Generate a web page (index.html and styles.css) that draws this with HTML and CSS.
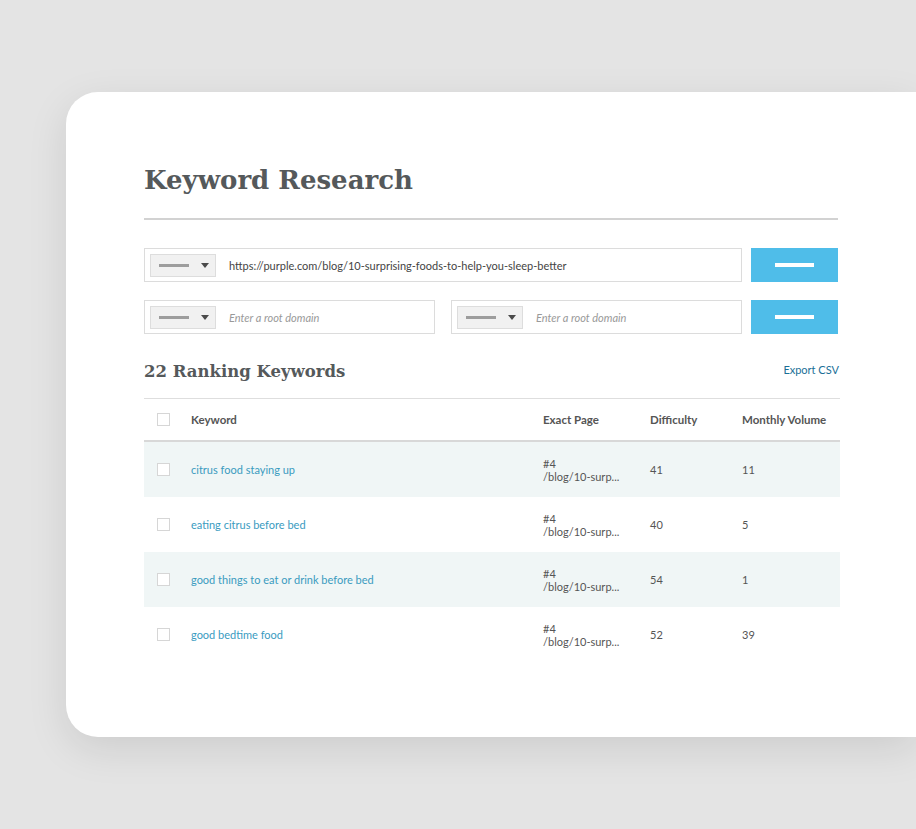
FILE: index.html
```html
<!DOCTYPE html>
<html>
<head>
<meta charset="utf-8">
<link rel="stylesheet" href="styles.css">
</head>
<body>
<div class="card">
  <div class="content">
    <h1 class="title">Keyword Research</h1>
    <div class="divider"></div>
    <div class="form-row first">
      <div class="field wide">
        <div class="select"><span class="bar"></span><span class="caret"></span></div>
        <span class="value">https://purple.com/blog/10-surprising-foods-to-help-you-sleep-better</span>
      </div>
      <div class="btn"><span class="btn-bar"></span></div>
    </div>
    <div class="form-row second">
      <div class="field half">
        <div class="select"><span class="bar"></span><span class="caret"></span></div>
        <span class="placeholder">Enter a root domain</span>
      </div>
      <div class="field half">
        <div class="select"><span class="bar"></span><span class="caret"></span></div>
        <span class="placeholder">Enter a root domain</span>
      </div>
      <div class="btn"><span class="btn-bar"></span></div>
    </div>
    <div class="section-head">
      <h2 class="subtitle">22 Ranking Keywords</h2>
      <span class="export">Export CSV</span>
    </div>
    <div class="table">
      <div class="row head">
        <div class="cell"><span class="check"></span></div>
        <div class="cell">Keyword</div>
        <div class="cell">Exact Page</div>
        <div class="cell">Difficulty</div>
        <div class="cell">Monthly Volume</div>
      </div>
      <div class="row shaded">
        <div class="cell"><span class="check"></span></div>
        <div class="cell kw">citrus food staying up</div>
        <div class="cell page">#4<br>/blog/10-surp...</div>
        <div class="cell num">41</div>
        <div class="cell num">11</div>
      </div>
      <div class="row">
        <div class="cell"><span class="check"></span></div>
        <div class="cell kw">eating citrus before bed</div>
        <div class="cell page">#4<br>/blog/10-surp...</div>
        <div class="cell num">40</div>
        <div class="cell num">5</div>
      </div>
      <div class="row shaded">
        <div class="cell"><span class="check"></span></div>
        <div class="cell kw">good things to eat or drink before bed</div>
        <div class="cell page">#4<br>/blog/10-surp...</div>
        <div class="cell num">54</div>
        <div class="cell num">1</div>
      </div>
      <div class="row">
        <div class="cell"><span class="check"></span></div>
        <div class="cell kw">good bedtime food</div>
        <div class="cell page">#4<br>/blog/10-surp...</div>
        <div class="cell num">52</div>
        <div class="cell num">39</div>
      </div>
    </div>
  </div>
</div>
</body>
</html>
```
FILE: styles.css
```css
html, body {
  margin: 0;
  padding: 0;
}
body {
  width: 916px;
  height: 829px;
  overflow: hidden;
  background: #e4e4e4;
  font-family: Lato, "Open Sans", sans-serif;
}
.card {
  margin: 92px 0 0 66px;
  width: 850px;
  height: 645px;
  background: #fff;
  border-radius: 32px 0 0 32px;
  box-shadow: 0 12px 40px rgba(0, 0, 0, 0.10);
  box-sizing: border-box;
  padding: 70px 0 0 78px;
}
.content {
  width: 696px;
}
.title {
  margin: 0;
  font-family: "DejaVu Serif", serif;
  font-weight: bold;
  font-size: 26px;
  line-height: 36px;
  color: #55595b;
}
.divider {
  margin-top: 20px;
  width: 694px;
  height: 2px;
  background: #d2d2d2;
}
.form-row {
  display: flex;
  gap: 9px;
  height: 34px;
}
.form-row.first { margin-top: 28px; }
.form-row.second { margin-top: 18px; gap: 0; }
.form-row.second .field.half + .field.half { margin-left: 16px; }
.form-row.second .btn { margin-left: 9px; }
.field {
  box-sizing: border-box;
  border: 1px solid #dcdcdc;
  height: 34px;
  display: flex;
  align-items: center;
  padding-left: 5px;
}
.field.wide { width: 598px; }
.field.half { width: 291px; }
.select {
  box-sizing: border-box;
  width: 66px;
  height: 23px;
  background: #f1f1f1;
  border: 1px solid #dddddd;
  display: flex;
  align-items: center;
  padding-left: 8px;
}
.bar {
  width: 30px;
  height: 3px;
  background: #9d9d9d;
}
.caret {
  margin-left: 12px;
  width: 0;
  height: 0;
  border-left: 4px solid transparent;
  border-right: 4px solid transparent;
  border-top: 5px solid #4a4a4a;
}
.value {
  margin-left: 13px;
  font-size: 11px;
  color: #444;
  white-space: nowrap;
}
.placeholder {
  margin-left: 13px;
  font-size: 11px;
  font-style: italic;
  color: #999;
}
.btn {
  width: 87px;
  height: 34px;
  background: #4fbde9;
  display: flex;
  align-items: center;
  justify-content: center;
}
.btn-bar {
  width: 39px;
  height: 4px;
  background: #fff;
}
.section-head {
  margin-top: 25px;
  display: flex;
  justify-content: space-between;
  align-items: center;
  height: 24px;
}
.subtitle {
  margin: 0;
  font-family: "DejaVu Serif", serif;
  font-weight: bold;
  font-size: 16.5px;
  color: #55595b;
}
.export {
  font-size: 11px;
  color: #1b6f97;
  margin-right: 1px;
  position: relative;
  top: -2px;
}
.table {
  margin-top: 15px;
  width: 696px;
  border-top: 1px solid #dedede;
}
.row {
  display: grid;
  grid-template-columns: 47px 352px 107px 92px 1fr;
  height: 55px;
  align-items: center;
  font-size: 11px;
  color: #555;
}
.row.head {
  height: 41px;
  border-bottom: 2px solid #d8d8d8;
  font-weight: bold;
  font-size: 11.5px;
  color: #555;
}
.row.shaded { background: #f0f6f6; }
.cell:first-child { padding-left: 13px; display: flex; }
.check {
  box-sizing: border-box;
  width: 13px;
  height: 13px;
  border: 1px solid #d6d6d6;
  background: #fff;
}
.kw { color: #3a9bbf; }
.page { line-height: 13px; color: #555; }
.num { color: #555; }
```
